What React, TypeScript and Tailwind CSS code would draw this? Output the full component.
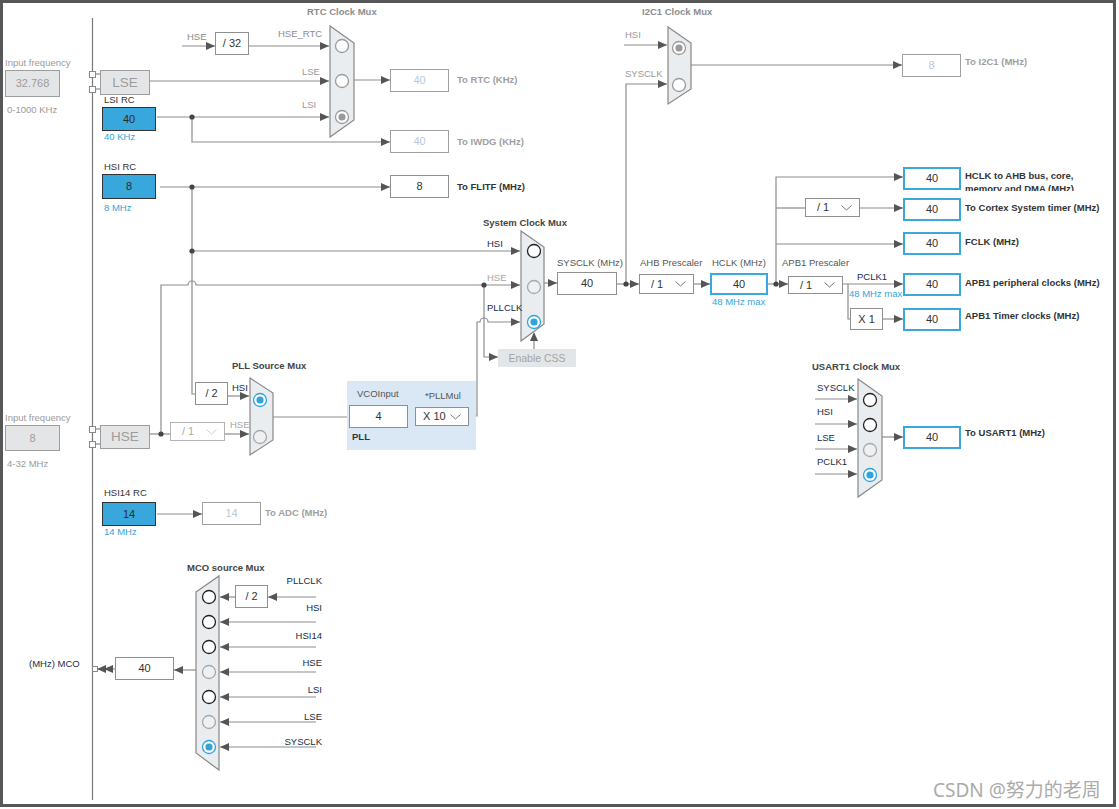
import type { ReactNode } from "react";

type Kind = "white" | "off" | "blue" | "out" | "gray";

const boxKind: Record<Kind, string> = {
  white: "bg-white border border-[#8f8f8f] text-[#333]",
  off: "bg-white border border-[#a0a0a0] text-[#b7c8da]",
  blue: "bg-[#38a8dc] border border-[#333] text-[#2b2b2b]",
  out: "bg-white border-2 border-[#3aa8dc] text-[#333]",
  gray: "bg-[#e4e5e6] border border-[#9d9d9d] text-[#9c9c9c]",
};

function Box({ className, kind = "white", children }: { className: string; kind?: Kind; children: ReactNode }) {
  return (
    <div className={`absolute flex items-center justify-center text-[11px] leading-none ${boxKind[kind]} ${className}`}>
      {children}
    </div>
  );
}

function Label({ className, children }: { className: string; children: ReactNode }) {
  return <div className={`absolute whitespace-nowrap text-[9.5px] leading-[12px] ${className}`}>{children}</div>;
}

function Select({ className, value, off }: { className: string; value: string; off?: boolean }) {
  return (
    <div
      className={`absolute flex items-center justify-between pl-[11px] pr-[7px] bg-white border text-[11px] leading-none ${
        off ? "border-[#b3b3b3] text-[#aaa]" : "border-[#8f8f8f] text-[#333]"
      } ${className}`}
    >
      <span>{value}</span>
      <svg width="11" height="6" viewBox="0 0 11 6">
        <polyline points="0.5,0.5 5.5,5 10.5,0.5" fill="none" stroke={off ? "#cfcfcf" : "#777"} strokeWidth="1" />
      </svg>
    </div>
  );
}

const wires = [
  "M182,46H215",
  "M249,46H329",
  "M150,81H329",
  "M157,117H329",
  "M192,117V142H390",
  "M354,80H390",
  "M160,187H390",
  "M192,187V394H195",
  "M192,251H520",
  "M161,434V285H188A4,4 0 0 1 196,285H520",
  "M150,434H170",
  "M225,434H249",
  "M228,396H249",
  "M273,417H349",
  "M408,416H415",
  "M469,416H477V322H480A4,4 0 0 1 488,322H520",
  "M484,285V357H498",
  "M534,349V336",
  "M544,283H557",
  "M617,284H639",
  "M626,284V84H667",
  "M624,45H667",
  "M691,65H902",
  "M694,284H710",
  "M768,284H788",
  "M776,284V177H903",
  "M776,208H805",
  "M860,208H903",
  "M776,244H903",
  "M843,284H903",
  "M848,284V319H850",
  "M883,319H903",
  "M815,399H857",
  "M815,424H857",
  "M815,449H857",
  "M815,474H857",
  "M882,437H903",
  "M157,514H202",
  "M316,597H268",
  "M235,597H220",
  "M316,622H220",
  "M316,647H220",
  "M316,672H220",
  "M316,697H220",
  "M316,722H220",
  "M316,747H220",
  "M196,670H174",
  "M115,669H97",
  "M95,74H100",
  "M95,89H100",
  "M95,429H100",
  "M95,444H100",
];

const tipsRight: [number, number][] = [
  [215, 46], [329, 46], [329, 81], [329, 117], [390, 142], [390, 80], [390, 187],
  [249, 434], [249, 396], [520, 251], [520, 285], [520, 322], [498, 357], [557, 283],
  [639, 284], [667, 84], [667, 45], [902, 65], [710, 284], [788, 284], [903, 177],
  [903, 208], [903, 244], [903, 284], [903, 319], [857, 399], [857, 424], [857, 449],
  [857, 474], [903, 437], [202, 514],
];

const tipsLeft: [number, number][] = [
  [268, 597], [220, 597], [220, 622], [220, 647], [220, 672], [220, 697], [220, 722],
  [220, 747], [174, 670], [97, 669], [104, 669],
];

const dots: [number, number][] = [
  [192, 117], [192, 187], [192, 251], [161, 434], [484, 285], [626, 284], [776, 284],
];

type Radio = "on" | "off" | "sel" | "grey" | "greysel";

const muxes: { points: string; x: number; radios: [number, Radio][] }[] = [
  { points: "330,26 354,43 354,120 330,137", x: 342, radios: [[46, "grey"], [81, "grey"], [117, "greysel"]] },
  { points: "668,27 691,43 691,89 668,104", x: 679, radios: [[48, "greysel"], [85, "grey"]] },
  { points: "521,231 544,247 544,324 521,341", x: 534, radios: [[251, "on"], [287, "off"], [322, "sel"]] },
  { points: "250,378 273,393 273,440 250,455", x: 260, radios: [[400, "sel"], [437, "off"]] },
  { points: "858,379 882,396 882,480 858,497", x: 870, radios: [[400, "on"], [425, "on"], [450, "off"], [475, "sel"]] },
  {
    points: "196,592 219,576 219,770 196,753",
    x: 209,
    radios: [[597, "on"], [622, "on"], [647, "on"], [672, "off"], [697, "on"], [722, "off"], [747, "sel"]],
  },
];

function RadioDot({ x, y, state }: { x: number; y: number; state: Radio }) {
  const stroke = { on: "#222", off: "#a8a8a8", sel: "#2ea3dc", grey: "#9a9a9a", greysel: "#9a9a9a" }[state];
  const fill = state === "off" ? "#eef0f2" : "#fff";
  return (
    <g>
      <circle cx={x} cy={y} r={6.5} fill={fill} stroke={stroke} strokeWidth={1.3} />
      {state === "sel" && <circle cx={x} cy={y} r={3.6} fill="#2ea3dc" />}
      {state === "greysel" && <circle cx={x} cy={y} r={3.6} fill="#9a9a9a" />}
    </g>
  );
}

function Wires() {
  return (
    <svg className="absolute left-0 top-0" width="1119" height="809" viewBox="0 0 1119 809">
      <path d="M92.5,18V800" stroke="#7a7a7a" strokeWidth={1.2} fill="none" />
      <g fill="none" stroke="#8c8c8c" strokeWidth={1.2}>
        {wires.map((d) => (
          <path key={d} d={d} />
        ))}
      </g>
      <g fill="#555">
        {tipsRight.map(([x, y]) => (
          <polygon key={`r${x}-${y}`} points={`${x - 9},${y - 4} ${x},${y} ${x - 9},${y + 4}`} />
        ))}
        {tipsLeft.map(([x, y]) => (
          <polygon key={`l${x}-${y}`} points={`${x + 9},${y - 4} ${x},${y} ${x + 9},${y + 4}`} />
        ))}
        <polygon points="530,341 534,332 538,341" />
        {dots.map(([x, y]) => (
          <circle key={`d${x}-${y}`} cx={x} cy={y} r={2.6} fill="#444" />
        ))}
      </g>
      {muxes.map((m) => (
        <g key={m.points}>
          <polygon points={m.points} fill="#e9edf0" stroke="#888" strokeWidth={1.2} />
          {m.radios.map(([y, s]) => (
            <RadioDot key={y} x={m.x} y={y} state={s} />
          ))}
        </g>
      ))}
      <g fill="#fff" stroke="#888" strokeWidth={1}>
        <rect x="89.5" y="71.5" width="6" height="6" />
        <rect x="89.5" y="86.5" width="6" height="6" />
        <rect x="89.5" y="426.5" width="6" height="6" />
        <rect x="89.5" y="441.5" width="6" height="6" />
        <rect x="92.5" y="666.5" width="5" height="5" />
      </g>
    </svg>
  );
}

const navy = "text-[#1a2b48]";

export default function App() {
  return (
    <div className="relative w-[1119px] h-[809px] bg-white overflow-hidden font-['Liberation_Sans',Arial,sans-serif]">
      <Wires />

      {/* oscillators */}
      <Label className="left-[5px] top-[57px] text-[#9a9a9a]">Input frequency</Label>
      <Box kind="gray" className="left-[5px] top-[70px] w-[55px] h-[27px] text-[11.5px]">32.768</Box>
      <Label className="left-[7px] top-[104px] text-[#9a9a9a]">0-1000 KHz</Label>
      <Box kind="gray" className="left-[100px] top-[70px] w-[50px] h-[25px] text-[13.5px]">LSE</Box>

      <Label className="left-[104px] top-[94px] text-[#333]">LSI RC</Label>
      <Box kind="blue" className="left-[102px] top-[107px] w-[54px] h-[24px]">40</Box>
      <Label className="left-[104px] top-[131px] text-[#35a3db]">40 KHz</Label>

      <Label className="left-[104px] top-[161px] text-[#333]">HSI RC</Label>
      <Box kind="blue" className="left-[102px] top-[174px] w-[54px] h-[25px]">8</Box>
      <Label className="left-[104px] top-[202px] text-[#35a3db]">8 MHz</Label>

      <Label className="left-[5px] top-[412px] text-[#9a9a9a]">Input frequency</Label>
      <Box kind="gray" className="left-[5px] top-[425px] w-[55px] h-[26px] text-[11.5px]">8</Box>
      <Label className="left-[7px] top-[458px] text-[#9a9a9a]">4-32 MHz</Label>
      <Box kind="gray" className="left-[100px] top-[425px] w-[50px] h-[24px] text-[13.5px]">HSE</Box>
      <Select off value="/ 1" className="left-[170px] top-[422px] w-[55px] h-[19px]" />

      <Label className="left-[104px] top-[487px] text-[#333]">HSI14 RC</Label>
      <Box kind="blue" className="left-[102px] top-[502px] w-[54px] h-[24px]">14</Box>
      <Label className="left-[104px] top-[526px] text-[#35a3db]">14 MHz</Label>
      <Box kind="off" className="left-[202px] top-[502px] w-[59px] h-[23px]">14</Box>
      <Label className="left-[265px] top-[507px] font-bold text-[#a0a0a0]">To ADC (MHz)</Label>

      {/* RTC */}
      <Label className="left-[307px] top-[6px] font-bold text-[#8d8d8d]">RTC Clock Mux</Label>
      <Label className="left-[187px] top-[31px] text-[#8d8d8d]">HSE</Label>
      <Box className="left-[215px] top-[32px] w-[34px] h-[23px]">/ 32</Box>
      <Label className="left-[278px] top-[28px] text-[#8d8d8d]">HSE_RTC</Label>
      <Label className="left-[302px] top-[66px] text-[#9a9a9a]">LSE</Label>
      <Label className="left-[302px] top-[99px] text-[#9a9a9a]">LSI</Label>
      <Box kind="off" className="left-[390px] top-[69px] w-[59px] h-[23px]">40</Box>
      <Label className="left-[457px] top-[74px] font-bold text-[#a0a0a0]">To RTC (KHz)</Label>
      <Box kind="off" className="left-[390px] top-[130px] w-[59px] h-[23px]">40</Box>
      <Label className="left-[457px] top-[136px] font-bold text-[#a0a0a0]">To IWDG (KHz)</Label>
      <Box className="left-[390px] top-[175px] w-[59px] h-[23px]">8</Box>
      <Label className="left-[457px] top-[181px] font-bold text-[#333]">To FLITF (MHz)</Label>

      {/* I2C1 */}
      <Label className="left-[642px] top-[6px] font-bold text-[#8d8d8d]">I2C1 Clock Mux</Label>
      <Label className="left-[625px] top-[29px] text-[#9a9a9a]">HSI</Label>
      <Label className="left-[625px] top-[68px] text-[#9a9a9a]">SYSCLK</Label>
      <Box kind="off" className="left-[902px] top-[54px] w-[59px] h-[23px]">8</Box>
      <Label className="left-[965px] top-[56px] font-bold text-[#a0a0a0]">To I2C1 (MHz)</Label>

      {/* PLL */}
      <Label className="left-[232px] top-[360px] font-bold text-[#444]">PLL Source Mux</Label>
      <Box className="left-[195px] top-[382px] w-[33px] h-[23px]">/ 2</Box>
      <Label className={`left-[232px] top-[382px] ${navy}`}>HSI</Label>
      <Label className="left-[230px] top-[419px] text-[#a5a5a5]">HSE</Label>
      <div className="absolute left-[347px] top-[381px] w-[129px] h-[69px] bg-[#dae8f5]" />
      <Label className="left-[357px] top-[388px] text-[#555]">VCOInput</Label>
      <Label className="left-[425px] top-[390px] text-[#555]">*PLLMul</Label>
      <Box className="left-[349px] top-[405px] w-[59px] h-[23px]">4</Box>
      <Select value="X 10" className="left-[415px] top-[407px] w-[54px] h-[19px] !pl-[7px]" />
      <Label className="left-[352px] top-[431px] font-bold text-[#333]">PLL</Label>

      {/* system clock */}
      <Label className="left-[483px] top-[217px] font-bold text-[#444]">System Clock Mux</Label>
      <Label className={`left-[487px] top-[238px] ${navy}`}>HSI</Label>
      <Label className="left-[487px] top-[272px] text-[#a5a5a5]">HSE</Label>
      <Label className={`left-[487px] top-[302px] ${navy}`}>PLLCLK</Label>
      <Box kind="gray" className="left-[498px] top-[349px] w-[78px] h-[18px] !border-0 !bg-[#e3e6e9] !text-[10.5px] !text-[#a3a3a3]">
        Enable CSS
      </Box>
      <Label className="left-[557px] top-[257px] text-[#555]">SYSCLK (MHz)</Label>
      <Box className="left-[557px] top-[272px] w-[60px] h-[23px]">40</Box>
      <Label className="left-[640px] top-[257px] text-[#555]">AHB Prescaler</Label>
      <Select value="/ 1" className="left-[639px] top-[274px] w-[55px] h-[20px]" />
      <Label className="left-[712px] top-[257px] text-[#555]">HCLK (MHz)</Label>
      <Box kind="out" className="left-[710px] top-[273px] w-[58px] h-[22px]">40</Box>
      <Label className="left-[712px] top-[296px] text-[#35a3db]">48 MHz max</Label>
      <Label className="left-[782px] top-[257px] text-[#555]">APB1 Prescaler</Label>
      <Select value="/ 1" className="left-[788px] top-[276px] w-[55px] h-[18px]" />
      <Label className={`left-[857px] top-[271px] ${navy}`}>PCLK1</Label>
      <Label className="left-[849px] top-[288px] text-[#35a3db]">48 MHz max</Label>
      <Select value="/ 1" className="left-[805px] top-[198px] w-[55px] h-[19px]" />
      <Box className="left-[850px] top-[308px] w-[33px] h-[22px]">X 1</Box>

      {/* outputs */}
      <Box kind="out" className="left-[903px] top-[167px] w-[58px] h-[23px]">40</Box>
      <Box kind="out" className="left-[903px] top-[198px] w-[58px] h-[23px]">40</Box>
      <Box kind="out" className="left-[903px] top-[232px] w-[58px] h-[23px]">40</Box>
      <Box kind="out" className="left-[903px] top-[273px] w-[58px] h-[23px]">40</Box>
      <Box kind="out" className="left-[903px] top-[308px] w-[58px] h-[23px]">40</Box>
      <div className="absolute left-[965px] top-[169px] h-[22px] overflow-hidden text-[9.5px] leading-[13px] font-bold text-[#333] whitespace-nowrap">
        <div>HCLK to AHB bus, core,</div>
        <div>memory and DMA (MHz)</div>
      </div>
      <Label className="left-[965px] top-[202px] font-bold text-[#333]">To Cortex System timer (MHz)</Label>
      <Label className="left-[965px] top-[236px] font-bold text-[#333]">FCLK (MHz)</Label>
      <Label className="left-[965px] top-[277px] font-bold text-[#333]">APB1 peripheral clocks (MHz)</Label>
      <Label className="left-[965px] top-[310px] font-bold text-[#333]">APB1 Timer clocks (MHz)</Label>

      {/* USART1 */}
      <Label className="left-[812px] top-[361px] font-bold text-[#444]">USART1 Clock Mux</Label>
      <Label className={`left-[817px] top-[382px] ${navy}`}>SYSCLK</Label>
      <Label className={`left-[817px] top-[406px] ${navy}`}>HSI</Label>
      <Label className={`left-[817px] top-[432px] ${navy}`}>LSE</Label>
      <Label className={`left-[817px] top-[456px] ${navy}`}>PCLK1</Label>
      <Box kind="out" className="left-[903px] top-[426px] w-[58px] h-[23px]">40</Box>
      <Label className="left-[965px] top-[427px] font-bold text-[#333]">To USART1 (MHz)</Label>

      {/* MCO */}
      <Label className="left-[187px] top-[562px] font-bold text-[#444]">MCO source Mux</Label>
      <Box className="left-[235px] top-[585px] w-[33px] h-[23px]">/ 2</Box>
      <Label className={`left-[262px] top-[575px] w-[60px] text-right ${navy}`}>PLLCLK</Label>
      <Label className={`left-[262px] top-[602px] w-[60px] text-right ${navy}`}>HSI</Label>
      <Label className={`left-[262px] top-[630px] w-[60px] text-right ${navy}`}>HSI14</Label>
      <Label className={`left-[262px] top-[657px] w-[60px] text-right ${navy}`}>HSE</Label>
      <Label className={`left-[262px] top-[684px] w-[60px] text-right ${navy}`}>LSI</Label>
      <Label className={`left-[262px] top-[711px] w-[60px] text-right ${navy}`}>LSE</Label>
      <Label className={`left-[262px] top-[736px] w-[60px] text-right ${navy}`}>SYSCLK</Label>
      <Box className="left-[115px] top-[657px] w-[59px] h-[23px]">40</Box>
      <Label className={`left-[29px] top-[658px] ${navy}`}>(MHz) MCO</Label>

      <div className="absolute left-[933px] top-[778px] text-[19px] leading-[25px] text-[#ababab] whitespace-nowrap font-['Noto_Sans','Noto_Sans_CJK_SC',sans-serif]">
        CSDN @努力的老周
      </div>

      <div className="absolute left-0 top-0 w-[1116px] h-[807px] border-[3px] border-[#575757] pointer-events-none" />
    </div>
  );
}
